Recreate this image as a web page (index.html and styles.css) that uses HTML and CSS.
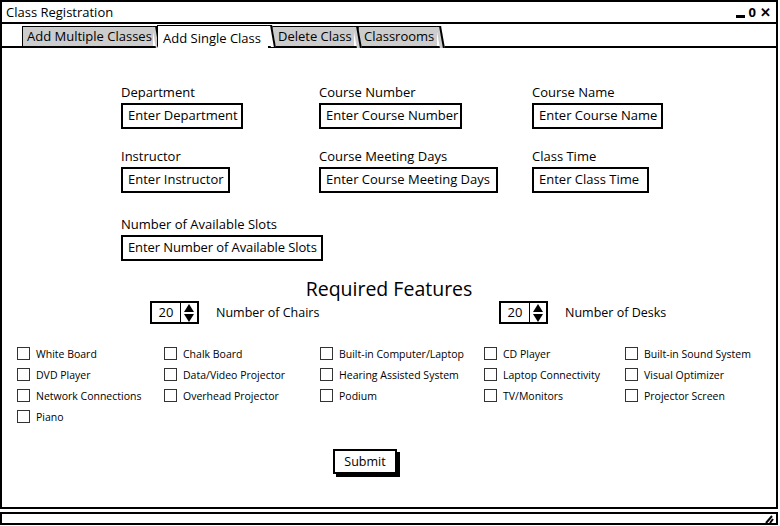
FILE: index.html
```html
<!DOCTYPE html>
<html lang="en">
<head>
  <meta charset="UTF-8" />
  <title>Class Registration</title>
  <link rel="stylesheet" href="styles.css">
</head>
<body>
  <div class="window">
    <div class="titlebar">
      <span class="title">Class Registration</span>
      <div class="win-controls">
        <span class="min"></span>
        <span class="max">0</span>
        <span class="close">&#x2715;</span>
      </div>
    </div>

    <div class="tabs">
      <div class="tab t-multi">Add Multiple Classes</div>
      <div class="tab t-single active">Add Single Class</div>
      <div class="tab t-delete">Delete Class</div>
      <div class="tab t-rooms">Classrooms</div>
    </div>

    <div class="panel">
      <div class="fields">
        <div class="field">
          <label>Department</label>
          <div class="input w-dept">Enter Department</div>
        </div>
        <div class="field">
          <label>Course Number</label>
          <div class="input w-num">Enter Course Number</div>
        </div>
        <div class="field">
          <label>Course Name</label>
          <div class="input w-name">Enter Course Name</div>
        </div>
        <div class="field">
          <label>Instructor</label>
          <div class="input w-inst">Enter Instructor</div>
        </div>
        <div class="field">
          <label>Course Meeting Days</label>
          <div class="input w-days">Enter Course Meeting Days</div>
        </div>
        <div class="field">
          <label>Class Time</label>
          <div class="input w-time">Enter Class Time</div>
        </div>
        <div class="field slots">
          <label>Number of Available Slots</label>
          <div class="input w-slots">Enter Number of Available Slots</div>
        </div>
      </div>

      <h2>Required Features</h2>

      <div class="counts">
        <div class="count">
          <div class="spinner">
            <span class="spin-value">20</span>
            <span class="spin-arrows">
              <svg width="12" height="20" viewBox="0 0 12 20">
                <path d="M6 1 L11 9 L1 9 Z" fill="#000" />
                <path d="M6 19 L11 11 L1 11 Z" fill="#000" />
              </svg>
            </span>
          </div>
          <span class="count-label">Number of Chairs</span>
        </div>
        <div class="count">
          <div class="spinner">
            <span class="spin-value">20</span>
            <span class="spin-arrows">
              <svg width="12" height="20" viewBox="0 0 12 20">
                <path d="M6 1 L11 9 L1 9 Z" fill="#000" />
                <path d="M6 19 L11 11 L1 11 Z" fill="#000" />
              </svg>
            </span>
          </div>
          <span class="count-label">Number of Desks</span>
        </div>
      </div>

      <div class="features">
        <label class="check"><span class="box"></span>White Board</label>
        <label class="check"><span class="box"></span>Chalk Board</label>
        <label class="check"><span class="box"></span>Built-in Computer/Laptop</label>
        <label class="check"><span class="box"></span>CD Player</label>
        <label class="check"><span class="box"></span>Built-in Sound System</label>

        <label class="check"><span class="box"></span>DVD Player</label>
        <label class="check"><span class="box"></span>Data/Video Projector</label>
        <label class="check"><span class="box"></span>Hearing Assisted System</label>
        <label class="check"><span class="box"></span>Laptop Connectivity</label>
        <label class="check"><span class="box"></span>Visual Optimizer</label>

        <label class="check"><span class="box"></span>Network Connections</label>
        <label class="check"><span class="box"></span>Overhead Projector</label>
        <label class="check"><span class="box"></span>Podium</label>
        <label class="check"><span class="box"></span>TV/Monitors</label>
        <label class="check"><span class="box"></span>Projector Screen</label>

        <label class="check"><span class="box"></span>Piano</label>
      </div>

      <div class="actions">
        <button class="submit">Submit</button>
      </div>
    </div>

    <div class="statusbar">
      <svg class="grip" width="10" height="10" viewBox="0 0 10 10">
        <path d="M2 9 L8 2" stroke="#000" stroke-width="2" />
        <path d="M6 9 L9 5" stroke="#000" stroke-width="2" />
      </svg>
    </div>
  </div>
</body>
</html>
```

FILE: styles.css
```css
body {
  margin: 0;
  padding: 0;
  background: #fff;
  font-family: "Open Sans", "Noto Sans", sans-serif;
  color: #000;
}

.window {
  width: 778px;
  height: 526px;
}

/* title bar */
.titlebar {
  height: 20px;
  border: 2px solid #000;
  display: flex;
  align-items: center;
  justify-content: space-between;
  padding: 0 4px;
}

.title {
  font-size: 13px;
}

.win-controls {
  display: flex;
  align-items: center;
  gap: 4px;
  padding-right: 1px;
}

.win-controls .min {
  width: 9px;
  height: 3px;
  background: #000;
  margin-top: 9px;
}

.win-controls .max {
  font-size: 13px;
  font-weight: bold;
  line-height: 1;
}

.win-controls .close {
  font-size: 13px;
  font-weight: bold;
  line-height: 1;
}

/* tabs */
.tabs {
  position: relative;
  z-index: 2;
  height: 24px;
  margin-bottom: -2px;
  border-left: 2px solid #000;
  border-right: 2px solid #000;
  display: flex;
  align-items: flex-end;
  padding-left: 20px;
}

.tab {
  box-sizing: border-box;
  position: relative;
  height: 22px;
  line-height: 19px;
  background: #ccc;
  border-top: 1px solid #000;
  border-left: 1px solid #000;
  border-bottom: 2px solid #000;
  padding: 0 0 0 4px;
  margin-right: 4px;
  font-size: 13px;
  white-space: nowrap;
}

.tab::after {
  content: "";
  position: absolute;
  top: -1px;
  right: -4px;
  width: 3px;
  height: 21px;
  background: inherit;
  border-right: 2px solid #000;
  border-top: 1px solid #000;
  transform: skewX(10deg);
  transform-origin: top left;
  z-index: 1;
}

.t-multi { width: 131px; }
.t-single { width: 111px; }
.t-delete { width: 82px; }
.t-rooms { width: 79px; }

.tab.active {
  background: #fff;
  height: 23px;
  line-height: 25px;
  padding-left: 5px;
  border-bottom-color: #fff;
  z-index: 2;
}

.t-delete,
.t-rooms {
  padding-left: 5px;
}

/* main panel */
.panel {
  height: 423px;
  border: 2px solid #000;
  padding-top: 36px;
  position: relative;
}

.fields {
  display: grid;
  grid-template-columns: 198px 213px auto;
  row-gap: 19px;
  padding-left: 119px;
}

.field label {
  display: block;
  font-size: 13px;
  line-height: 16px;
  margin-bottom: 3px;
}

.field.slots {
  margin-top: 4px;
}

.input {
  box-sizing: border-box;
  height: 26px;
  border: 2px solid #000;
  padding: 0 5px;
  font-size: 13px;
  line-height: 21px;
  white-space: nowrap;
}

.w-dept { width: 122px; }
.w-num { width: 143px; }
.w-name { width: 131px; }
.w-inst { width: 109px; }
.w-days { width: 179px; }
.w-time { width: 117px; }
.w-slots { width: 202px; letter-spacing: -0.1px; }

h2 {
  font-size: 19.5px;
  font-weight: normal;
  text-align: center;
  margin: 16px 0 0 0;
  line-height: 24px;
}

/* number spinners */
.counts {
  display: flex;
  padding-left: 148px;
}

.count {
  display: flex;
  flex-shrink: 0;
  align-items: center;
  width: 349px;
}

.count + .count {
  width: auto;
}

.spinner {
  box-sizing: border-box;
  display: flex;
  width: 49px;
  height: 23px;
  border: 2px solid #000;
}

.spin-value {
  flex: 1;
  font-size: 13px;
  line-height: 19px;
  text-align: center;
  border-right: 1.5px solid #000;
}

.spin-arrows {
  display: flex;
  align-items: center;
  padding: 0 2px;
}

.count-label {
  font-size: 12.5px;
  margin-left: 17px;
}

/* checkboxes */
.features {
  display: grid;
  grid-template-columns: 147px 156px 164px 141px auto;
  grid-auto-rows: 21px;
  padding-left: 15px;
  margin-top: 19px;
}

.check {
  display: flex;
  align-items: center;
  font-size: 10.5px;
  white-space: nowrap;
}

.box {
  box-sizing: border-box;
  width: 13px;
  height: 13px;
  border: 1.5px solid #333;
  margin-right: 6px;
  flex-shrink: 0;
}

/* submit */
.actions {
  padding-left: 331px;
  margin-top: 22px;
}

.submit {
  font-family: inherit;
  font-size: 12.5px;
  background: #fff;
  border: 2px solid #000;
  width: 64px;
  height: 25px;
  padding: 0;
  box-shadow: 3px 3px 0 #000;
}

/* status bar */
.statusbar {
  height: 9px;
  border: 2px solid #000;
  margin-top: 3px;
  display: flex;
  justify-content: flex-end;
  align-items: center;
}

.grip {
  margin-right: 2px;
}
```
